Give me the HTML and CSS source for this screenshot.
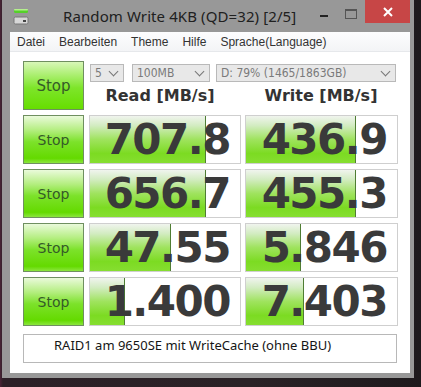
FILE: index.html
```html
<!DOCTYPE html>
<html>
<head>
  <title>Random Write 4KB (QD=32) [2/5]</title>
  <link rel="stylesheet" href="styles.css">
</head>
<body>
  <div class="window">
    <div class="titlebar">
      <svg class="app-icon" width="16" height="17" viewBox="0 0 16 17">
        <rect x="1" y="1" width="14" height="4" rx="1.5" fill="#55d12a"/>
        <rect x="1" y="1" width="14" height="1.5" rx="0.7" fill="#b6f08e"/>
        <rect x="1" y="9" width="14" height="7" rx="1.5" fill="#d7d7d7" stroke="#777" stroke-width="1"/>
        <rect x="10" y="12" width="3" height="2" fill="#444"/>
      </svg>
      <div class="title">Random Write 4KB (QD=32) [2/5]</div>
      <div class="caption-buttons">
        <div class="cap-min"></div>
        <div class="cap-max"></div>
        <div class="cap-close">
          <svg width="10" height="10" viewBox="0 0 10 10">
            <path d="M1 1 L9 9 M9 1 L1 9" stroke="#fff" stroke-width="2"/>
          </svg>
        </div>
      </div>
    </div>

    <div class="client">
      <div class="menubar">
        <span>Datei</span>
        <span>Bearbeiten</span>
        <span>Theme</span>
        <span>Hilfe</span>
        <span>Sprache(Language)</span>
      </div>

      <div class="main">
        <div class="top-row">
          <div class="stop big">Stop</div>
          <div class="top-right">
            <div class="selects">
              <div class="select sel-count">5<span class="chev"></span></div>
              <div class="select sel-size">100MB<span class="chev"></span></div>
              <div class="select sel-drive">D: 79% (1465/1863GB)<span class="chev"></span></div>
            </div>
            <div class="headers">
              <div>Read [MB/s]</div>
              <div>Write [MB/s]</div>
            </div>
          </div>
        </div>

        <div class="row">
          <div class="stop">Stop</div>
          <div class="value"><div class="bar" style="width: 115px"></div><span>707.8</span></div>
          <div class="value"><div class="bar" style="width: 109px"></div><span>436.9</span></div>
        </div>
        <div class="row">
          <div class="stop">Stop</div>
          <div class="value"><div class="bar" style="width: 115px"></div><span>656.7</span></div>
          <div class="value"><div class="bar" style="width: 109px"></div><span>455.3</span></div>
        </div>
        <div class="row">
          <div class="stop">Stop</div>
          <div class="value"><div class="bar" style="width: 80px"></div><span>47.55</span></div>
          <div class="value"><div class="bar" style="width: 54px"></div><span>5.846</span></div>
        </div>
        <div class="row">
          <div class="stop">Stop</div>
          <div class="value"><div class="bar" style="width: 34px"></div><span>1.400</span></div>
          <div class="value"><div class="bar" style="width: 57px"></div><span>7.403</span></div>
        </div>

        <div class="comment">RAID1 am 9650SE mit WriteCache (ohne BBU)</div>
      </div>
    </div>
  </div>
</body>
</html>
```

FILE: styles.css
```css
body {
  margin: 0;
  height: 387px;
  overflow: hidden;
  background: linear-gradient(90deg, #4a2436 0px, #2c2027 3px, #2a2226 60%, #1e1a1d 100%);
  font-family: "Noto Sans", "DejaVu Sans", sans-serif;
}

.window {
  margin-left: 2px;
  width: 412px;
  height: 378px;
  box-sizing: border-box;
  padding: 0 4px 5px 8px;
  background-color: #989898;
}

.titlebar {
  height: 32px;
  display: flex;
  align-items: flex-start;
}

.app-icon {
  margin: 8px 0 0 3px;
}

.title {
  margin: 6px 0 0 34px;
  font-size: 15px;
  color: #202020;
  letter-spacing: 0.1px;
}

.caption-buttons {
  margin-left: auto;
  display: flex;
  align-items: flex-start;
}

.cap-min {
  width: 8px;
  height: 2px;
  background-color: #222;
  margin: 15px 0 0 0;
}

.cap-max {
  width: 10px;
  height: 7px;
  border: 1px solid #555;
  border-top-width: 2px;
  margin: 9px 0 0 17px;
}

.cap-close {
  width: 45px;
  height: 23px;
  margin-left: 8px;
  background-color: #c74646;
  display: flex;
  align-items: center;
  justify-content: center;
}

.client {
  background-color: #fff;
  height: 341px;
}

.menubar {
  height: 20px;
  display: flex;
  align-items: center;
  gap: 14px;
  padding-left: 7px;
  font-family: "Liberation Sans", Arial, sans-serif;
  font-size: 12px;
  color: #333;
  background: linear-gradient(#fdfdfe, #f3f4f6);
  border-bottom: 1px solid #e6e8eb;
  box-sizing: border-box;
}

.main {
  padding: 9px 13px 0 13px;
}

.top-row {
  display: flex;
  gap: 5px;
  height: 49px;
  margin-bottom: 5px;
}

.stop {
  width: 61px;
  height: 49px;
  box-sizing: border-box;
  flex-shrink: 0;
  border: 1px solid #6f8f60;
  background: linear-gradient(#eafadb 0%, #b4ee80 30%, #7ce22a 55%, #64da00 90%, #8be63e 100%);
  display: flex;
  align-items: center;
  justify-content: center;
  font-family: "DejaVu Sans", sans-serif;
  font-size: 14px;
  color: #355a28;
}

.stop.big {
  font-size: 15px;
  background: linear-gradient(#d8f7b8 0%, #a7ee6a 30%, #7ee52a 55%, #66de00 100%);
}

.top-right {
  display: flex;
  flex-direction: column;
}

.selects {
  display: flex;
  margin: 3px 0 0 1px;
  height: 18px;
}

.select {
  height: 18px;
  box-sizing: border-box;
  border: 1px solid #b9b9b9;
  background-color: #e8e8e8;
  color: #7a7a7a;
  font-family: "DejaVu Sans Condensed", "DejaVu Sans", sans-serif;
  font-size: 12px;
  line-height: 16px;
  padding-left: 4px;
  display: flex;
  justify-content: space-between;
  align-items: center;
}

.sel-count {
  width: 34px;
}

.sel-size {
  width: 78px;
  margin-left: 8px;
}

.sel-drive {
  width: 180px;
  margin-left: 6px;
}

.chev {
  width: 6px;
  height: 6px;
  border-right: 1.5px solid #777;
  border-bottom: 1.5px solid #777;
  transform: rotate(45deg);
  margin: 0 6px 4px 0;
}

.headers {
  display: grid;
  grid-template-columns: 152px 152px;
  gap: 4px;
  margin-top: 4px;
  font-family: "DejaVu Sans", sans-serif;
  font-weight: bold;
  font-size: 16px;
  color: #333;
}

.headers div {
  text-align: center;
}

.headers div:first-child {
  padding-right: 10px;
}

.row {
  display: grid;
  grid-template-columns: 61px 152px 152px;
  column-gap: 5px;
  height: 49px;
  margin-bottom: 5px;
}

.row .value + .value {
  margin-left: -1px;
}

.value {
  position: relative;
  border: 1px solid #cfcfcf;
  background-color: #fff;
  box-sizing: border-box;
  display: flex;
  align-items: center;
  justify-content: flex-end;
  padding-right: 10px;
}

.bar {
  position: absolute;
  left: 0;
  top: 0;
  bottom: 0;
  border-right: 1px solid #4f7d33;
  background: linear-gradient(#f0f4ee 0%, #d3ecc2 20%, #9fe35e 50%, #7cdb22 80%, #86de30 100%);
}

.value span {
  position: relative;
  font-family: "DejaVu Sans", sans-serif;
  font-weight: bold;
  font-size: 42px;
  letter-spacing: -1.5px;
  color: #3a3a3a;
  line-height: 1;
}

.comment {
  margin-top: 8px;
  height: 29px;
  box-sizing: border-box;
  border: 1px solid #b8b8b8;
  padding: 1px 0 0 30px;
  font-family: "Noto Sans", sans-serif;
  font-size: 13px;
  color: #151515;
}
```
